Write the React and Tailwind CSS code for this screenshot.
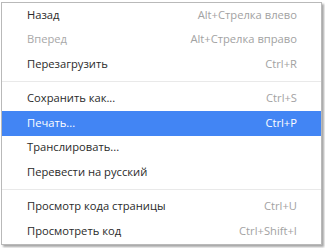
export default function App() {
    const groups = [
        [
            { label: 'Назад', key: 'Alt+Стрелка влево' },
            { label: 'Вперед', key: 'Alt+Стрелка вправо', disabled: true },
            { label: 'Перезагрузить', key: 'Ctrl+R' },
        ],
        [
            { label: 'Сохранить как...', key: 'Ctrl+S' },
            { label: 'Печать...', key: 'Ctrl+P', active: true },
            { label: 'Транслировать...' },
            { label: 'Перевести на русский' },
        ],
        [
            { label: 'Просмотр кода страницы', key: 'Ctrl+U' },
            { label: 'Просмотреть код', key: 'Ctrl+Shift+I' },
        ],
    ]

    return (
        <div className="w-[325px] h-[248px] bg-white pt-[2px] pl-[1px]">
            <div
                className="w-[321px] border border-[#b9b9b9] bg-white shadow-[2px_2px_2px_rgba(0,0,0,0.35)] text-[11.2px]"
                style={{ fontFamily: '"Open Sans", "Noto Sans", sans-serif' }}
            >
                {groups.map((items, gi) => (
                    <div key={gi}>
                        {gi > 0 && (
                            <div className="h-[10px] flex items-center">
                                <div className="h-px w-full bg-[#e9e9e9]" />
                            </div>
                        )}
                        {items.map((it) => (
                            <div
                                key={it.label}
                                className={
                                    'h-[24.5px] flex items-center justify-between pl-[25px] pr-[24px] ' +
                                    (it.active ? 'bg-[#4285f4] text-white' : it.disabled ? 'text-[#a8a8a8]' : 'text-[#2a2a2a]')
                                }
                            >
                                <span>{it.label}</span>
                                {it.key && (
                                    <span className={it.active ? 'text-white' : 'text-[#a2a2a2]'}>{it.key}</span>
                                )}
                            </div>
                        ))}
                    </div>
                ))}
            </div>
        </div>
    )
}
